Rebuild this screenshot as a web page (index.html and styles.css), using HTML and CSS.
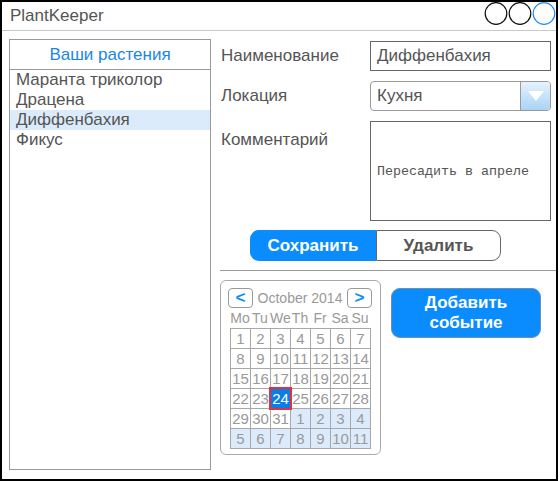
FILE: index.html
```html
<!DOCTYPE html>
<html lang="ru">
<head>
<meta charset="utf-8">
<title>PlantKeeper</title>
<link rel="stylesheet" href="styles.css">
</head>
<body>
<div class="window">
  <div class="titlebar">
    <span class="title">PlantKeeper</span>
    <svg class="controls" width="72" height="23" viewBox="0 0 72 23">
      <circle cx="12" cy="11.5" r="10.8" fill="none" stroke="#111" stroke-width="1.2"/>
      <circle cx="36" cy="11.5" r="10.8" fill="none" stroke="#111" stroke-width="1.2"/>
      <circle cx="60" cy="11.5" r="10.8" fill="none" stroke="#1e8fff" stroke-width="1.2"/>
    </svg>
  </div>
  <div class="main">
    <div class="plants">
      <div class="plants-head">Ваши растения</div>
      <ul class="plant-list">
        <li>Маранта триколор</li>
        <li>Драцена</li>
        <li class="sel">Диффенбахия</li>
        <li>Фикус</li>
      </ul>
    </div>
    <div class="editor">
      <div class="form">
        <div class="label">Наименование</div>
        <div class="input">Диффенбахия</div>
        <div class="label">Локация</div>
        <div class="select">
          <span class="select-value">Кухня</span>
          <span class="select-btn"><svg width="16" height="10" viewBox="0 0 16 10"><polygon points="0,0 16,0 8,10" fill="#fff"/></svg></span>
        </div>
        <div class="label top">Комментарий</div>
        <div class="textarea">Пересадить в апреле</div>
      </div>
      <div class="actions">
        <button class="seg save">Сохранить</button>
        <button class="seg del">Удалить</button>
      </div>
      <div class="divider"></div>
      <div class="bottom">
        <div class="calendar">
          <div class="cal-nav">
            <span class="nav-btn">&lt;</span>
            <span class="month">October 2014</span>
            <span class="nav-btn">&gt;</span>
          </div>
          <div class="cal-head">
            <span>Mo</span><span>Tu</span><span>We</span><span>Th</span><span>Fr</span><span>Sa</span><span>Su</span>
          </div>
          <div class="cal-grid">
            <span>1</span><span>2</span><span>3</span><span>4</span><span>5</span><span>6</span><span>7</span>
            <span>8</span><span>9</span><span>10</span><span>11</span><span>12</span><span>13</span><span>14</span>
            <span>15</span><span>16</span><span>17</span><span>18</span><span>19</span><span>20</span><span>21</span>
            <span>22</span><span>23</span><span class="today">24</span><span>25</span><span>26</span><span>27</span><span>28</span>
            <span>29</span><span>30</span><span>31</span><span class="next">1</span><span class="next">2</span><span class="next">3</span><span class="next">4</span>
            <span class="next">5</span><span class="next">6</span><span class="next">7</span><span class="next">8</span><span class="next">9</span><span class="next">10</span><span class="next">11</span>
          </div>
        </div>
        <button class="add">Добавить<br>событие</button>
      </div>
    </div>
  </div>
</div>
</body>
</html>
```
FILE: styles.css
```css
body {
  margin: 0;
  background: #fff;
  font-family: "Liberation Sans", Arial, sans-serif;
}

.window {
  box-sizing: border-box;
  width: 558px;
  height: 481px;
  border: 2px solid #000;
  display: flex;
  flex-direction: column;
}

.titlebar {
  height: 28px;
  flex: none;
  border-bottom: 1px solid #c8c8c8;
  display: flex;
  align-items: center;
  justify-content: space-between;
  padding-left: 8px;
}

.title {
  font-size: 17px;
  color: #555;
}

.controls {
  align-self: flex-start;
  display: block;
}

.main {
  display: flex;
  padding: 8px 0 0 7px;
}

.plants {
  box-sizing: border-box;
  width: 202px;
  height: 431px;
  border: 1px solid #999;
}

.plants-head {
  height: 29px;
  border-bottom: 1px solid #999;
  color: #1a86e8;
  font-size: 17px;
  display: flex;
  align-items: center;
  justify-content: center;
}

.plant-list {
  list-style: none;
  margin: 0;
  padding: 0;
}

.plant-list li {
  height: 20px;
  line-height: 20px;
  padding-left: 6px;
  font-size: 17px;
  color: #555;
}

.plant-list li.sel {
  background: #dcebfb;
}

.editor {
  margin-left: 9px;
  width: 336px;
  padding-top: 2px;
}

.form {
  display: grid;
  grid-template-columns: 150px 181px;
  grid-template-rows: 30px 30px 100px;
  row-gap: 10px;
}

.label {
  padding-left: 1px;
  font-size: 17px;
  color: #555;
  display: flex;
  align-items: center;
}

.label.top {
  align-items: flex-start;
  padding-top: 9px;
  line-height: 20px;
}

.input {
  box-sizing: border-box;
  border: 1px solid #666;
  padding-left: 6px;
  display: flex;
  align-items: center;
  font-size: 17px;
  color: #555;
}

.select {
  box-sizing: border-box;
  border: 1px solid #999;
  border-radius: 4px;
  display: flex;
  overflow: hidden;
}

.select-value {
  flex: 1;
  padding-left: 6px;
  display: flex;
  align-items: center;
  font-size: 17px;
  color: #555;
}

.select-btn {
  width: 29px;
  border-left: 1px solid #999;
  background: linear-gradient(#e6f2fd, #a8d4f7);
  display: flex;
  align-items: center;
  justify-content: center;
}

.textarea {
  box-sizing: border-box;
  border: 1px solid #666;
  padding-left: 6px;
  display: flex;
  align-items: center;
  font-family: "Liberation Mono", monospace;
  font-size: 13.33px;
  color: #555;
}

.actions {
  display: flex;
  margin: 9px 0 0 30px;
  height: 31px;
}

.seg {
  box-sizing: border-box;
  height: 31px;
  margin: 0;
  padding: 0;
  font-family: "Liberation Sans", Arial, sans-serif;
  font-size: 17px;
  font-weight: bold;
}

.save {
  width: 126px;
  background: #0a8cff;
  color: #fff;
  border: none;
  border-radius: 9px 0 0 9px;
}

.del {
  width: 125px;
  background: #fff;
  color: #555;
  border: 1px solid #666;
  border-radius: 0 9px 9px 0;
}

.divider {
  margin-top: 9px;
  border-top: 1px solid #999;
}

.bottom {
  display: flex;
  align-items: flex-start;
  margin-top: 9px;
}

.calendar {
  box-sizing: border-box;
  width: 161px;
  height: 175px;
  border: 1px solid #aaa;
  border-radius: 6px;
  padding: 7px 0 0 7px;
}

.cal-nav {
  display: flex;
  align-items: center;
  width: 144px;
  height: 20px;
}

.nav-btn {
  box-sizing: border-box;
  width: 25px;
  height: 20px;
  border: 1px solid #999;
  border-radius: 4px;
  color: #0a8cff;
  font-weight: bold;
  font-size: 17px;
  display: flex;
  align-items: center;
  justify-content: center;
}

.month {
  flex: 1;
  text-align: center;
  color: #999;
  font-size: 14px;
}

.cal-head {
  display: grid;
  grid-template-columns: repeat(7, 20px);
  margin-left: 2px;
  height: 20px;
  align-items: center;
  text-align: center;
  color: #999;
  font-size: 14px;
}

.cal-grid {
  display: grid;
  grid-template-columns: repeat(7, 19px);
  grid-auto-rows: 19px;
  gap: 1px;
  padding: 1px;
  background: #a8a8a8;
  width: max-content;
  margin-left: 2px;
}

.cal-grid span {
  background: #fff;
  display: flex;
  align-items: center;
  justify-content: center;
  font-size: 15px;
  color: #999;
}

.cal-grid span.next {
  background: #dcebfb;
}

.cal-grid span.today {
  position: relative;
  z-index: 1;
  background: #0a7ee8;
  color: #fff;
  outline: 2px solid #e8303a;
}

.add {
  box-sizing: border-box;
  margin: 8px 0 0 10px;
  width: 150px;
  height: 50px;
  border: 1px solid #6a8fb0;
  border-radius: 9px;
  background: #0a8cff;
  color: #fff;
  font-family: "Liberation Sans", Arial, sans-serif;
  font-weight: bold;
  font-size: 17px;
  line-height: 20px;
  padding: 0;
}
```
